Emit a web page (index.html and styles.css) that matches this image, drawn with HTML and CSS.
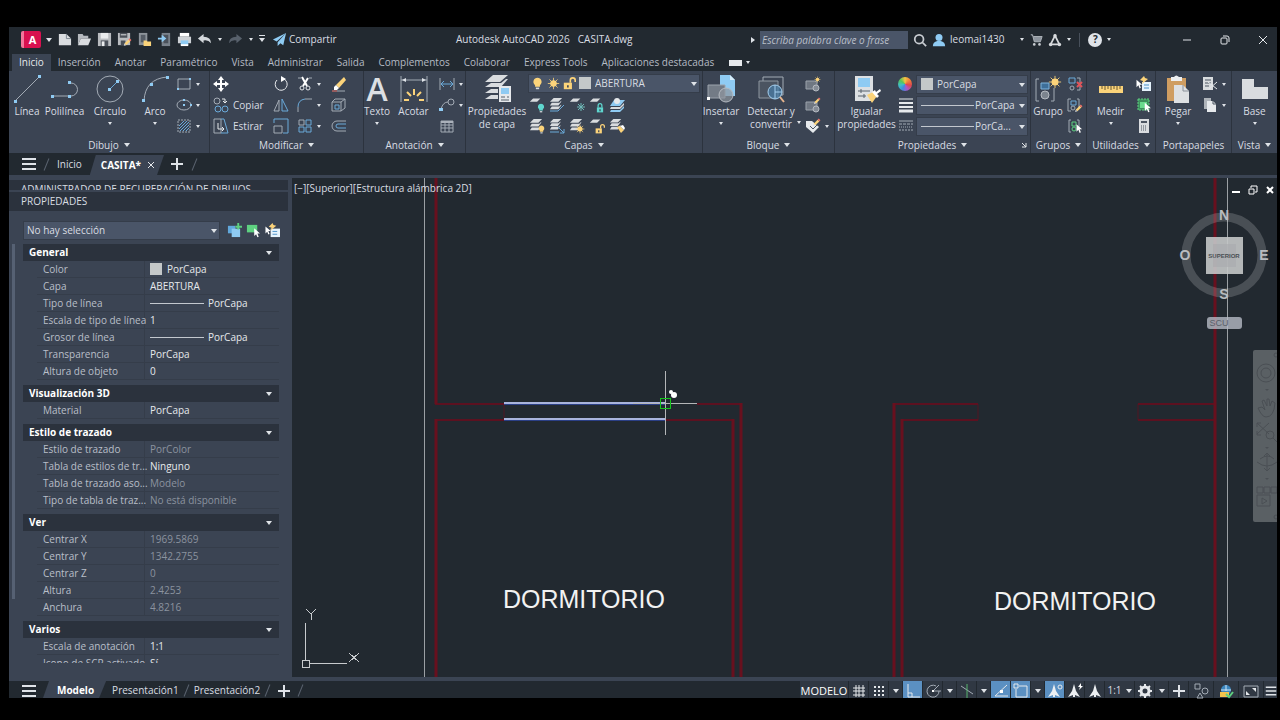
FILE: index.html
```html
<!DOCTYPE html>
<html lang="es">
<head>
  <meta charset="UTF-8">
  <meta name="viewport" content="width=device-width, initial-scale=1.0">
  <title>Autodesk AutoCAD 2026 - CASITA.dwg</title>
  <link rel="stylesheet" href="styles.css">
</head>
<body>
  <!-- shared icon parts -->
  <svg class="defs" aria-hidden="true">
    <symbol id="sheet" viewBox="0 0 16 16"><path class="f-light" d="M5 3h9l-4 4H1z"/></symbol>
    <symbol id="layers" viewBox="0 0 16 16">
      <path class="f-light" d="M5 1h9l-4 4H1z"/>
      <path class="f-light" d="M3 6h8l2-2v1l-3 4H1zM3 10h8l2-2v1l-3 4H1z"/>
    </symbol>
    <symbol id="sun" viewBox="0 0 16 16">
      <circle class="f-yellow" cx="8" cy="8" r="4"/>
      <path class="s-yellow" d="M8 1v14M1 8h14M3 3l10 10M13 3L3 13"/>
    </symbol>
    <symbol id="bulb" viewBox="0 0 16 16">
      <path d="M8 1a5 5 0 0 0-3 9v2h6v-2a5 5 0 0 0-3-9z" fill="currentColor"/>
      <path class="f-light" d="M6 13h4v2H6z"/>
    </symbol>
    <symbol id="lock" viewBox="0 0 16 16">
      <path d="M3 7h10v8H3z" fill="currentColor"/>
      <path d="M5 7V4a3 3 0 0 1 6 0v3" fill="none" stroke="currentColor" stroke-width="2"/>
      <path d="M7 10h2v3H7z" fill="#3b4453"/>
    </symbol>
    <symbol id="unlock" viewBox="0 0 16 16">
      <path d="M1 7h10v8H1z" fill="currentColor"/>
      <path d="M9 7V4a3 3 0 0 1 6 0v2" fill="none" stroke="currentColor" stroke-width="2"/>
      <path d="M5 10h2v3H5z" fill="#3b4453"/>
    </symbol>
    <symbol id="pointer" viewBox="0 0 16 16"><path d="M4 1v12l3-3 2 5 2-1-2-5h4z" fill="#fff"/></symbol>
    <symbol id="pencil" viewBox="0 0 16 16">
      <path class="f-yellow" d="M3 10l7-7 3 3-7 7z"/><path d="M10 3l2-2 3 3-2 2z" fill="#f0746a"/><path class="f-light" d="M3 10l3 3-4 1z"/>
    </symbol>
    <symbol id="burger" viewBox="0 0 16 16"><path d="M1 3h14M1 8h14M1 13h14" stroke="#dfe3e8" stroke-width="2"/></symbol>
    <symbol id="plus" viewBox="0 0 16 16"><path d="M8 2v12M2 8h12" stroke="#dfe3e8" stroke-width="2"/></symbol>
    <symbol id="annot" viewBox="0 0 16 16"><path d="M8 1l2 7 4 6-5-2v2H7v-2l-5 2 4-6z" fill="#eceff2"/></symbol>
  </svg>

  <div class="app">
    <header class="titlebar">
      <div class="quick">
        <button class="logo" aria-label="AutoCAD">A</button>
        <i class="caret"></i>
        <button aria-label="Nuevo"><svg viewBox="0 0 16 16"><path class="f-light" d="M2 2h8l5 5v7H2z"/><path d="M10 2v5h5" fill="none" stroke="#79828d"/></svg></button>
        <button aria-label="Abrir"><svg viewBox="0 0 16 16"><path d="M1 14V2h5l1 2h5v3H4z" fill="#b5b9be"/><path class="f-light" d="M4 7h11l-3 7H1z"/></svg></button>
        <button aria-label="Guardar"><svg viewBox="0 0 16 16"><path d="M1 1h14v14H1z" fill="#b9bcc0"/><path d="M4 1h8v6H4z" fill="#e9ebed"/><path d="M4 9h8v6H4z" fill="#4a5059"/><path d="M5 10h3v5H5z" fill="#e9ebed"/></svg></button>
        <button aria-label="Guardar como"><svg viewBox="0 0 16 16"><path d="M1 1h13v13H1z" fill="#b9bcc0"/><path d="M3 1h8v5H3zM4 9h5v5H4z" fill="#4a5059"/><path d="M4 3h6" stroke="#e9ebed"/><use href="#pencil" x="6" y="6" width="10" height="10"/></svg></button>
        <button aria-label="Abrir de web"><svg viewBox="0 0 16 16"><path d="M2 1h9v13H2z" fill="#8d939a"/><path d="M4 3h5v8H4z" fill="#555c66"/><path class="f-yellow" d="M7 9h3l1 1h4v5H7z"/></svg></button>
        <button aria-label="Guardar en web"><svg viewBox="0 0 16 16"><path d="M5 1h9v14H5z" fill="#79818b"/><path d="M7 3h5v9H7z" fill="#4a515b"/><path class="f-blue" d="M1 6h4V3l5 4-5 4V8H1z"/></svg></button>
        <button aria-label="Trazar"><svg viewBox="0 0 16 16"><path d="M3 1h10v4H3z" fill="#fff"/><path d="M1 5h14v7H1z" fill="#cdd1d5"/><path class="f-blue" d="M4 9h8v5H4z"/><path d="M4 13h8v2H4z" fill="#fff"/></svg></button>
        <button aria-label="Deshacer"><svg viewBox="0 0 16 16"><path d="M1 7l6-5v3q8 0 8 7-3-4-8-3v3z" fill="#d4d8dc"/></svg></button>
        <i class="caret sm"></i>
        <button aria-label="Rehacer"><svg viewBox="0 0 16 16"><path d="M15 7L9 2v3q-8 0-8 7 3-4 8-3v3z" fill="#58616c"/></svg></button>
        <i class="caret sm"></i>
        <i class="caret over"></i>
        <button class="share"><svg viewBox="0 0 16 16"><path class="f-blue" d="M15 1L1 8l4 2zM15 1L6 11v4l3-3 3 2z"/></svg>Compartir</button>
      </div>
      <div class="doc-title"><span>Autodesk AutoCAD 2026</span><span>CASITA.dwg</span></div>
      <div class="account">
        <i class="caret right"></i>
        <input type="text" aria-label="Buscar" placeholder="Escriba palabra clave o frase">
        <button aria-label="Buscar"><svg viewBox="0 0 16 16"><circle cx="7" cy="7" r="5" fill="none" stroke="#c8ccd1" stroke-width="2"/><path d="M10 10l5 5" stroke="#c8ccd1" stroke-width="2"/></svg></button>
        <button class="user"><svg viewBox="0 0 16 16"><circle class="f-blue" cx="8" cy="5" r="4"/><path class="f-blue" d="M1 15q0-5 5-6h4q5 1 5 6z"/></svg>leomai1430</button>
        <i class="caret sm"></i>
        <button aria-label="Tienda"><svg viewBox="0 0 16 16"><path d="M2 2h2l2 8h7l2-6H5" fill="#8d949d" stroke="#b4b9bf"/><circle cx="6" cy="13" r="1.500" fill="#c8ccd1"/><circle cx="12" cy="13" r="1.500" fill="#c8ccd1"/></svg></button>
        <button aria-label="Autodesk App"><svg viewBox="0 0 16 16"><path d="M8 3l5 10H3z" fill="none" stroke="#d7dadd" stroke-width="2"/><g fill="#d7dadd"><circle cx="8" cy="3" r="2"/><circle cx="3" cy="13" r="2"/><circle cx="13" cy="13" r="2"/></g></svg></button>
        <i class="caret sm"></i>
        <span class="vsep"></span>
        <button class="help" aria-label="Ayuda">?</button>
        <i class="caret sm"></i>
        <div class="win">
          <button aria-label="Minimizar"><svg viewBox="0 0 16 16"><path d="M4 8h8" stroke="#dfe3e8"/></svg></button>
          <button aria-label="Restaurar"><svg viewBox="0 0 16 16"><rect class="s-white" x="4" y="6" width="6" height="6" rx="1"/><path class="s-white" d="M6 4h4q2 0 2 2v4"/></svg></button>
          <button aria-label="Cerrar"><svg viewBox="0 0 16 16"><path class="s-white" d="M4 4l8 8M12 4l-8 8"/></svg></button>
        </div>
      </div>
    </header>

    <nav class="menu">
      <a class="on" href="#">Inicio</a>
      <a href="#">Inserción</a>
      <a href="#">Anotar</a>
      <a href="#">Paramétrico</a>
      <a href="#">Vista</a>
      <a href="#">Administrar</a>
      <a href="#">Salida</a>
      <a href="#">Complementos</a>
      <a href="#">Colaborar</a>
      <a href="#">Express Tools</a>
      <a href="#">Aplicaciones destacadas</a>
      <button class="collapse" aria-label="Minimizar cinta"><span></span><i class="caret sm"></i></button>
    </nav>

    <section class="ribbon">
      <div class="panel dibujo">
        <div class="tools">
          <button class="big"><svg viewBox="0 0 28 28"><path class="ln" d="M2 26L26 2"/><path class="dot" d="M1 25h3v3H1zM25 0h3v3h-3z"/></svg>Línea</button>
          <button class="big"><svg viewBox="0 0 28 28"><path class="ln" d="M1 21h19a6 6 0 0 0 0-13h-2"/><path class="dot" d="M0 20h3v3H0zM17 20h3v3h-3zM17 6h3v3h-3z"/></svg>Polilínea</button>
          <button class="big"><svg viewBox="0 0 28 28"><circle class="ln" cx="14" cy="14" r="13"/><path class="ln-b" d="M14 14l7-7"/><path class="dot" d="M12 13h3v3h-3zM20 5h3v3h-3z"/></svg>Círculo<i class="caret sm"></i></button>
          <button class="big"><svg viewBox="0 0 28 28"><path class="ln" d="M3 26Q4 4 26 2"/><path class="dot" d="M1 24h3v3H1zM9 8h3v3H9zM25 1h3v3h-3z"/></svg>Arco<i class="caret sm"></i></button>
          <div class="stack">
            <button aria-label="Rectángulo"><svg viewBox="0 0 16 16"><path class="ln" d="M2 3h12v10H2z"/><path class="dot" d="M1 12h2v2H1zM13 2h2v2h-2z"/></svg><i class="caret sm"></i></button>
            <button aria-label="Elipse"><svg viewBox="0 0 16 16"><ellipse class="ln" cx="8" cy="8" rx="7" ry="5"/><path class="dot" d="M7 7h2v2H7zM7 2h2v2H7zM14 7h2v2h-2z"/></svg><i class="caret sm"></i></button>
            <button aria-label="Sombreado"><svg viewBox="0 0 16 16"><path class="ln" stroke-dasharray="2 1" d="M2 2h12v12H2z"/><path class="ln-b" d="M3 8l5-5M3 11l8-8M4 13l9-9M7 13l6-6M10 13l3-3"/></svg><i class="caret sm"></i></button>
          </div>
        </div>
        <h2>Dibujo<i class="caret"></i></h2>
      </div>

      <div class="panel modificar">
        <div class="tools">
          <div class="stack">
            <button aria-label="Desplazar"><svg viewBox="0 0 16 16"><path d="M8 3v10M3 8h10" stroke="#fff" stroke-width="2"/><path d="M8 0l3 4H5zM8 16l3-4H5zM0 8l4-3v6zM16 8l-4-3v6z" fill="#fff"/></svg></button>
            <button><svg viewBox="0 0 16 16"><circle class="ln" cx="4" cy="4" r="3"/><circle class="ln-b" cx="5" cy="12" r="3"/><circle class="ln-b" cx="12" cy="12" r="3"/><path class="s-white" d="M9 2h3v4M10 4l2 2 2-2"/></svg>Copiar</button>
            <button><svg viewBox="0 0 16 16"><path class="ln" d="M1 1h7v14H1z"/><path class="ln-b" d="M8 1h3l4 14H8"/><path class="s-white" d="M5 5v6h6M9 9l2 2-2 2"/></svg>Estirar</button>
          </div>
          <div class="stack">
            <button aria-label="Girar"><svg viewBox="0 0 16 16"><path class="s-white" d="M11 3a6 6 0 1 1-7 1"/><path d="M8 0l5 3-5 3z" fill="#fff"/></svg></button>
            <button aria-label="Simetría"><svg viewBox="0 0 16 16"><path class="ln" d="M6 3v11H1z"/><path class="ln-b" d="M9 2l6 12H9z"/></svg></button>
            <button aria-label="Escala"><svg viewBox="0 0 16 16"><path class="ln-b" d="M1 5V1h14v14h-5"/><path class="ln" d="M1 8h8v7H1z"/></svg></button>
          </div>
          <div class="stack">
            <button aria-label="Recortar"><svg viewBox="0 0 16 16"><path class="ln" d="M1 2h3M12 2h3"/><path d="M5 1l5 9M11 2l-5 8" stroke="#fff" stroke-width="2"/><circle class="s-white" cx="5" cy="12" r="2"/><circle class="s-white" cx="11" cy="12" r="2"/></svg><i class="caret sm"></i></button>
            <button aria-label="Empalme"><svg viewBox="0 0 16 16"><path class="ln" d="M1 15v-5"/><path class="ln-b" d="M1 10Q1 3 8 2"/><path class="ln" d="M8 2h7"/></svg><i class="caret sm"></i></button>
            <button aria-label="Matriz"><svg viewBox="0 0 16 16"><path class="ln" d="M2 2h5v5H2z"/><path class="ln-b" d="M9 2h5v5H9zM2 9h5v5H2zM9 9h5v5H9z"/></svg><i class="caret sm"></i></button>
          </div>
          <div class="stack">
            <button aria-label="Borrar"><svg viewBox="0 0 16 16"><path class="f-yellow" d="M5 9l8-8 2 3-7 8z"/><path d="M3 11l2-2 3 3-2 2H3z" fill="#fff"/><path d="M1 15h5" stroke="#f0746a"/><path class="ln" d="M6 15h8"/></svg></button>
            <button aria-label="Descomponer"><svg viewBox="0 0 16 16"><path class="ln" d="M1 5h9v9H1zM4 2h10v9M10 5l4-3M1 5l3-3M10 14l4-3"/><path class="ln-b" d="M4 8h4v4H4z"/></svg></button>
            <button aria-label="Desfase"><svg viewBox="0 0 16 16"><path class="ln" d="M15 3H6a5 5 0 0 0 0 10h9"/><path class="ln-b" d="M15 6H7a2 2 0 0 0 0 4h8"/></svg></button>
          </div>
        </div>
        <h2>Modificar<i class="caret"></i></h2>
      </div>

      <div class="panel anotacion">
        <div class="tools">
          <button class="big"><span class="letter">A</span>Texto<i class="caret sm"></i></button>
          <button class="big"><svg viewBox="0 0 28 28"><path class="ln" d="M1 1v26M27 1v26M1 5h26"/><path d="M2 5l4-2v4zM26 5l-4-2v4z" fill="#dfe3e8"/><path d="M14 14v6M7 17l4 4M21 17l-4 4M4 25h5M19 25h5" stroke="#fbd37a" stroke-width="2"/></svg>Acotar</button>
          <div class="stack">
            <button aria-label="Lineal"><svg viewBox="0 0 16 16"><path class="ln" d="M1 2v12M15 2v12"/><path class="ln-b" d="M2 8h12M5 5L2 8l3 3M11 5l3 3-3 3"/></svg><i class="caret sm"></i></button>
            <button aria-label="Directriz"><svg viewBox="0 0 16 16"><circle class="ln" cx="12" cy="5" r="3"/><path class="ln" d="M9 5q-5 0-7 7"/><path class="dot" d="M0 11h4v3H0z"/></svg><i class="caret sm"></i></button>
            <button aria-label="Tabla"><svg viewBox="0 0 16 16"><path class="ln" d="M2 3h12v11H2zM2 7h12M2 10h12M6 5v9M10 5v9"/><path d="M2 3h12v2H2z" fill="#aab1ba"/></svg></button>
          </div>
        </div>
        <h2>Anotación<i class="caret"></i></h2>
      </div>

      <div class="panel capas">
        <div class="tools">
          <button class="big"><svg viewBox="0 0 28 28"><path class="f-light" d="M10 0h15l-8 7H2zM8 8h10l5-4h2l-7 8H2zM8 14h7v4H2zM8 20h7v4H2z"/><path d="M16 11h12v16H16z" fill="#e6e9ec"/><path class="f-blue" d="M18 13h8v6h-8z"/><path d="M18 22h4M18 25h8M24 22h2" stroke="#59626d"/></svg>Propiedades de capa</button>
          <div class="layer-grid">
            <div class="combo layer">
              <select aria-label="Capa actual"><option>ABERTURA</option></select>
              <div class="over-icons">
                <svg class="yellow"><use href="#bulb"/></svg>
                <svg><use href="#sun"/></svg>
                <svg class="yellow"><use href="#unlock"/></svg>
                <span class="swatch"></span>
              </div>
            </div>
            <div class="icons">
              <button aria-label="Desactivar"><svg viewBox="0 0 16 16"><use href="#sheet" y="-1" width="13" height="13"/><use class="teal" href="#bulb" x="7" y="6" width="10" height="10"/></svg></button>
              <button aria-label="Aislar"><svg viewBox="0 0 16 16"><use href="#layers" width="15" height="15"/><path class="ln-b" d="M1 14h8l6-6"/></svg></button>
              <button aria-label="Inutilizar"><svg viewBox="0 0 16 16"><use href="#sheet" y="-1" width="13" height="13"/><path d="M12 6v8M8 10h8M9 7l6 6M15 7l-6 6" stroke="#6fb9b8"/></svg></button>
              <button aria-label="Bloquear"><svg viewBox="0 0 16 16"><use href="#sheet" y="-1" width="13" height="13"/><use class="teal" href="#lock" x="6" y="6" width="10" height="10"/></svg></button>
              <button aria-label="Definir actual"><svg viewBox="0 0 16 16"><path class="f-blue" d="M5 3h11l-5 6H1z"/><path class="f-light" d="M2 10h9l4-4v2l-4 4H1z"/><path class="f-blue" d="M2 13h9l4-4v2l-4 4H1z"/><circle cx="8" cy="4" r="3" fill="#e6e9ec"/></svg></button>
            </div>
            <div class="icons">
              <button aria-label="Activar todas"><svg viewBox="0 0 16 16"><use href="#layers" width="15" height="15"/><use class="yellow" href="#bulb" x="8" y="7" width="9" height="9"/></svg></button>
              <button aria-label="Desaislar"><svg viewBox="0 0 16 16"><use href="#layers" width="14" height="14"/><path class="ln-b" d="M1 14h9M9 9l6 6M15 11v4h-4"/></svg></button>
              <button aria-label="Reutilizar"><svg viewBox="0 0 16 16"><use href="#layers" width="15" height="15"/><use href="#sun" x="6" y="6" width="10" height="10"/></svg></button>
              <button aria-label="Desbloquear"><svg viewBox="0 0 16 16"><use href="#sheet" y="-1" width="13" height="13"/><use class="yellow" href="#unlock" x="6" y="6" width="10" height="10"/></svg></button>
              <button aria-label="Igualar capa"><svg viewBox="0 0 16 16"><use href="#layers" width="14" height="14"/><path class="f-yellow" d="M8 9l3-1 4 4-3 3z"/><path d="M11 8l3-1 2 3-1 2z" fill="#fff"/></svg></button>
            </div>
          </div>
        </div>
        <h2>Capas<i class="caret"></i></h2>
      </div>

      <div class="panel bloque">
        <div class="tools">
          <button class="big"><svg viewBox="0 0 28 28"><path class="f-blue" d="M13 0h10l5 5v16H13z"/><path d="M23 0v5h5" fill="#d6edfb"/><path d="M1 10h17v13H1z" fill="#737b86" stroke="#9ca3ac"/><circle cx="19" cy="20" r="7" fill="#8e959e" fill-opacity=".7" stroke="#b5bac1"/><path d="M0 22h3v3H0z" fill="#fff"/></svg>Insertar<i class="caret sm"></i></button>
          <button class="big side"><svg viewBox="0 0 28 28"><path class="ln" d="M6 6V2h20v18h-3"/><path d="M2 6h19v17H2z" fill="#4b5461" stroke="#8f97a1"/><circle cx="18" cy="17" r="7" fill="#4786b4" fill-opacity=".6" stroke="#a5cfee"/><path d="M18 10v14M18 17h7" stroke="#a5cfee"/><path d="M23 22l4 5" stroke="#e7b58d" stroke-width="2"/></svg>Detectar y convertir<i class="caret sm"></i></button>
          <div class="stack">
            <button aria-label="Crear bloque"><svg viewBox="0 0 16 16"><path d="M1 5h11v8H1z" fill="#6f7782" stroke="#9ca3ac"/><circle cx="11" cy="12" r="3" fill="#858c96" stroke="#b5bac1"/><use href="#sun" x="9" width="7" height="7"/></svg></button>
            <button aria-label="Editar bloque"><svg viewBox="0 0 16 16"><path d="M1 5h11v8H1z" fill="#6f7782" stroke="#9ca3ac"/><circle cx="11" cy="12" r="3" fill="#858c96" stroke="#b5bac1"/><use href="#pencil" x="8" width="8" height="8"/></svg></button>
            <button aria-label="Editar atributos"><svg viewBox="0 0 16 16"><path d="M1 3h6l7 6-6 6-7-6z" fill="#e6e9ec"/><path d="M5 8l3 3 4-4" fill="none" stroke="#4b5461"/><use href="#pencil" x="7" width="9" height="9"/></svg><i class="caret sm"></i></button>
          </div>
        </div>
        <h2>Bloque<i class="caret"></i></h2>
      </div>

      <div class="panel propiedades">
        <div class="tools">
          <button class="big"><svg viewBox="0 0 28 28"><path d="M2 1h18v25H2z" fill="#dde0e3"/><path class="f-blue" d="M5 3h12v9H5z"/><path d="M5 16h12M5 21h8M8 14v4M11 19v4" stroke="#59626d"/><path class="f-yellow" d="M14 20l6-3 4 4-5 7z"/><path d="M19 17l3-2 1 2 4-3 1 2-4 3 2 2-2 2z" fill="#fff"/></svg>Igualar propiedades</button>
          <div class="prop-grid">
            <span class="wheel"></span>
            <div class="combo color"><select aria-label="Color"><option>PorCapa</option></select><span class="swatch"></span></div>
            <svg viewBox="0 0 16 16"><path d="M1 2h14" stroke="#e6e9ec"/><path d="M1 6h14" stroke="#e6e9ec" stroke-width="2"/><path d="M1 10h14" stroke="#e6e9ec" stroke-width="2"/><path d="M1 14h14" stroke="#e6e9ec" stroke-width="3"/></svg>
            <div class="combo line"><select aria-label="Grosor de línea"><option>PorCapa</option></select></div>
            <svg viewBox="0 0 16 16"><path d="M1 3h14" class="ln"/><path d="M1 6h14" class="ln" stroke-dasharray="3 1"/><path d="M1 9h14" class="ln" stroke-dasharray="1 1"/><path d="M1 12h14" class="ln" stroke-dasharray="2 1"/></svg>
            <div class="combo line"><select aria-label="Tipo de línea"><option>PorCa...</option></select></div>
          </div>
        </div>
        <h2>Propiedades<i class="caret"></i></h2>
        <svg class="launcher" viewBox="0 0 8 8"><path class="s-white" d="M2 2l4 4M6 2v4H2"/></svg>
      </div>

      <div class="panel grupos">
        <div class="tools">
          <button class="big"><svg viewBox="0 0 28 28"><path class="ln" d="M5 4H2v22h3M17 26h3V13"/><path d="M7 8h8v6H7z" fill="#3e6f99" stroke="#7fb4dc"/><circle cx="11" cy="20" r="4" fill="#7c848e" stroke="#b5bac1"/><use href="#sun" x="14" width="14" height="14"/></svg>Grupo</button>
          <div class="stack">
            <button aria-label="Desagrupar"><svg viewBox="0 0 16 16"><path class="ln" d="M10 2h3v12h-3"/><path class="ln-b" d="M2 2h6v5H2z"/><circle class="ln" cx="5" cy="12" r="2"/><path d="M10 6l5 5M15 6l-5 5" stroke="#e2545a" stroke-width="2"/></svg></button>
            <button aria-label="Editar grupo"><svg viewBox="0 0 16 16"><path class="ln" d="M4 2H1v12h3M10 2h2v8"/><path class="ln-b" d="M4 4h5v4H4z"/><circle class="ln" cx="6" cy="11" r="2"/><use href="#pencil" x="7" y="7" width="9" height="9"/></svg></button>
            <button aria-label="Selección de grupo"><svg viewBox="0 0 16 16"><path class="ln" d="M4 2H2v12h2M10 2h2v8"/><path d="M5 4h4v4H5z" fill="none" stroke="#5ed181"/><circle cx="7" cy="11" r="2" fill="none" stroke="#5ed181"/><use href="#pointer" x="7" y="5" width="10" height="11"/></svg></button>
          </div>
        </div>
        <h2>Grupos<i class="caret"></i></h2>
      </div>

      <div class="panel utilidades">
        <div class="tools">
          <button class="big"><svg viewBox="0 0 28 28"><path class="f-yellow" d="M2 11h24v7H2z"/><path d="M5 11v3M8 11v4M11 11v3M14 11v4M17 11v3M20 11v4M23 11v3" stroke="#6b5a33"/></svg>Medir<i class="caret sm"></i></button>
          <div class="stack">
            <button aria-label="Selección rápida"><svg viewBox="0 0 16 16"><path d="M6 6h9v9H6z" fill="#e6f3fc"/><path d="M8 9h5M8 12h5" stroke="#4a90c7"/><path class="f-yellow" d="M8 0L4 4l3 1-1 3 6-5-3-1z"/><use href="#pointer" x="-2" y="2" width="10" height="12"/></svg></button>
            <button aria-label="Seleccionar todo"><svg viewBox="0 0 16 16"><path d="M2 2h11v11H2z" fill="#3d8f5c" stroke="#5ed181" stroke-dasharray="2 1"/><path d="M4 5h7v6H4z" fill="#69db8d"/><use href="#pointer" x="6" y="5" width="11" height="11"/></svg></button>
            <button aria-label="Calculadora"><svg viewBox="0 0 16 16"><path d="M3 1h10v14H3z" fill="#d9dcdf"/><path d="M5 3h6v2H5z" fill="#4b5461"/><path d="M5 8h6M5 10h6M5 12h6" stroke="#4b5461" stroke-dasharray="1 1"/></svg></button>
          </div>
        </div>
        <h2>Utilidades<i class="caret"></i></h2>
      </div>

      <div class="panel portapapeles">
        <div class="tools">
          <button class="big"><svg viewBox="0 0 28 28"><path d="M3 3h19v23H3z" fill="#cf9d61"/><path d="M7 2h3q2-3 5 0h3v4H7z" fill="#eceef0"/><path d="M10 10h9l6 6v12H10z" fill="#dde0e3"/><path d="M19 10v6h6" fill="none" stroke="#8b929b"/></svg>Pegar<i class="caret sm"></i></button>
          <div class="stack">
            <button aria-label="Cortar"><svg viewBox="0 0 16 16"><path d="M1 1h10v13H1z" fill="#d9dcdf"/><path d="M3 4h6M3 7h6M3 10h4" stroke="#4b5461"/><path class="s-white" d="M6 6l9 7M15 6l-8 7"/></svg><i class="caret sm"></i></button>
            <button aria-label="Copiar"><svg viewBox="0 0 16 16"><path d="M2 1h7v11H2z" fill="#aeb3b9"/><path d="M5 4h6l3 3v8H5z" fill="#e6e9ec"/><path d="M11 4v3h3" fill="none" stroke="#4b5461"/></svg><i class="caret sm"></i></button>
          </div>
        </div>
        <h2>Portapapeles</h2>
      </div>

      <div class="panel vista">
        <div class="tools">
          <button class="big"><svg viewBox="0 0 28 28"><path class="f-light" d="M1 4h12v8h14v12H1z"/></svg>Base<i class="caret sm"></i></button>
        </div>
        <h2>Vista<i class="caret"></i></h2>
      </div>
    </section>

    <nav class="doc-tabs">
      <button class="ham" aria-label="Menú"><svg><use href="#burger"/></svg></button>
      <i class="slash"></i>
      <a href="#">Inicio</a>
      <a class="on" href="#">CASITA* <svg viewBox="0 0 8 8"><path class="s-white" d="M1 1l6 6M7 1L1 7"/></svg></a>
      <button class="add" aria-label="Nuevo dibujo"><svg><use href="#plus"/></svg></button>
      <i class="slash"></i>
    </nav>

    <main class="workspace">
      <aside class="palette">
        <div class="bar cut">ADMINISTRADOR DE RECUPERACIÓN DE DIBUJOS</div>
        <div class="bar">PROPIEDADES</div>
        <div class="select-row">
          <div class="combo"><select aria-label="Selección"><option>No hay selección</option></select></div>
          <button aria-label="Selección añadida"><svg viewBox="0 0 16 16"><path d="M1 3h8v8H1z" fill="#61a8dc"/><path class="f-blue" d="M5 6h9v9H5z"/><path d="M12 0v7M9 4h7" stroke="#5ed181" stroke-width="2"/></svg></button>
          <button aria-label="Designar objetos"><svg viewBox="0 0 16 16"><path d="M1 2h11v8H1z" fill="#5ed181"/><use href="#pointer" x="6" y="5" width="11" height="11"/></svg></button>
          <button aria-label="Selección rápida"><svg viewBox="0 0 16 16"><path d="M6 6h10v9H6z" fill="#e6f3fc"/><path d="M8 9h5M8 12h5" stroke="#4a90c7"/><path class="f-yellow" d="M8 0L4 4l3 1-1 3 6-5-3-1z"/><use href="#pointer" x="-2" y="2" width="10" height="12"/></svg></button>
        </div>
        <div class="props">
          <h3>General<i class="caret"></i></h3>
          <table>
            <tr><th>Color</th><td><span class="swatch"></span>PorCapa</td></tr>
            <tr><th>Capa</th><td>ABERTURA</td></tr>
            <tr><th>Tipo de línea</th><td><span class="rule"></span>PorCapa</td></tr>
            <tr><th>Escala de tipo de línea</th><td>1</td></tr>
            <tr><th>Grosor de línea</th><td><span class="rule"></span>PorCapa</td></tr>
            <tr><th>Transparencia</th><td>PorCapa</td></tr>
            <tr><th>Altura de objeto</th><td>0</td></tr>
          </table>
          <h3>Visualización 3D<i class="caret"></i></h3>
          <table>
            <tr><th>Material</th><td>PorCapa</td></tr>
          </table>
          <h3>Estilo de trazado<i class="caret"></i></h3>
          <table>
            <tr><th>Estilo de trazado</th><td class="off">PorColor</td></tr>
            <tr><th>Tabla de estilos de tr...</th><td>Ninguno</td></tr>
            <tr><th>Tabla de trazado aso...</th><td class="off">Modelo</td></tr>
            <tr><th>Tipo de tabla de traz...</th><td class="off">No está disponible</td></tr>
          </table>
          <h3>Ver<i class="caret"></i></h3>
          <table>
            <tr><th>Centrar X</th><td class="off">1969.5869</td></tr>
            <tr><th>Centrar Y</th><td class="off">1342.2755</td></tr>
            <tr><th>Centrar Z</th><td class="off">0</td></tr>
            <tr><th>Altura</th><td class="off">2.4253</td></tr>
            <tr><th>Anchura</th><td class="off">4.8216</td></tr>
          </table>
          <h3>Varios<i class="caret"></i></h3>
          <table>
            <tr><th>Escala de anotación</th><td>1:1</td></tr>
            <tr><th>Icono de SCP activado</th><td>Sí</td></tr>
          </table>
        </div>
      </aside>

      <div class="viewport">
        <svg class="drawing" viewBox="0 0 985 499" preserveAspectRatio="xMinYMin slice">
          <g class="axis"><path d="M132 0v499M935 0v499"/></g>
          <g class="wall thin">
            <path d="M143 226h69M143 242h69M405 226h45M373 242h69M601 226h85M609 242h77M846 226h77M846 242h77"/>
            <path d="M212 226v16M686 226v16M846 226v16" opacity=".4"/>
          </g>
          <g class="wall">
            <path d="M144 0v226M144 241v258M923 0v499M441 241v258M449 225v274M602 225v274M610 241v258"/>
          </g>
          <path d="M212 226h162M212 242h162" stroke="#2b3f86" stroke-width="2"/>
          <path d="M212 225h162M212 241h162" stroke="#a9b4dd" stroke-width="2"/>
          <path d="M373 193v64M341 225h64" stroke="#b4b6b8"/>
          <rect x="368" y="220" width="10" height="10" fill="none" stroke="#14c41c" stroke-width="1"/>
          <g class="snap"><circle cx="379" cy="214" r="2"/><circle cx="382" cy="217" r="3"/></g>
          <text x="292" y="430">DORMITORIO</text>
          <text x="783" y="432">DORMITORIO</text>
          <!-- UCS icon -->
          <g class="ucs"><path d="M13 445v37M17 485h38M10 482h7v7h-7zM14 431l5 5 5-5M19 436v6M57 475l10 9M67 475l-10 9"/></g>
        </svg>
        <div class="view-label">[−][Superior][Estructura alámbrica 2D]</div>
        <div class="view-win">
          <button aria-label="Minimizar vista"><svg viewBox="0 0 10 10"><path d="M1 7h8" stroke="#fff" stroke-width="2"/></svg></button>
          <button aria-label="Restaurar vista"><svg viewBox="0 0 10 10"><path d="M1 4h5v5H1zM3 3V1h6v6H7" fill="none" stroke="#fff" stroke-width="1"/></svg></button>
          <button aria-label="Cerrar vista"><svg viewBox="0 0 10 10"><path d="M2 2l6 6M8 2L2 8" stroke="#fff" stroke-width="2"/></svg></button>
        </div>
        <svg class="cube" viewBox="0 0 92 122">
          <circle cx="46" cy="49" r="38" fill="none" stroke="#fff" stroke-opacity=".18" stroke-width="9"/>
          <rect x="28" y="31" width="37" height="37" fill="#c4c6c8" fill-opacity=".9"/>
          <rect x="35" y="38" width="23" height="23" fill="#a8aaad" fill-opacity=".6"/>
          <text class="face" x="46" y="52">SUPERIOR</text>
          <text x="46" y="14">N</text><text x="46" y="93">S</text><text x="7" y="54">O</text><text x="86" y="54">E</text>
          <rect x="29" y="111" width="35" height="12" rx="3" fill="#b6bac6" fill-opacity=".8"/>
          <text class="scu" x="41" y="120">SCU</text>
        </svg>
        <svg class="navbar" viewBox="0 0 24 172">
          <rect x="0" y="0" width="28" height="172" rx="2" fill="#7a7e81" fill-opacity=".65"/>
          <g fill="none" stroke="#4a4f54">
            <circle cx="13" cy="23" r="9"/><circle cx="13" cy="23" r="5"/><circle cx="23" cy="5" r="2"/>
            <path d="M5 58q4 9 8 9 8 0 9-14l-3-2-2 5-1-7h-2v7l-3-6-2 1 3 9-3-3z"/>
            <path d="M4 73l12 11M16 73L4 84M4 77v-4h4M4 81v4h4"/><circle cx="17" cy="85" r="4"/><path d="M20 88l4 4"/>
            <path d="M14 103v18M11 106l3-3 3 3M11 118l3 3 3-3M4 112q10 8 20 0M7 109q8-6 14 0"/>
            <path d="M4 137h6v6H4zM11 137h6v6h-6zM18 137h6v6h-6zM4 145h13v11H4zM9 148v6l5-3z"/><circle cx="23" cy="167" r="2"/>
          </g>
          <g fill="#4a4f54"><path d="M12 39h4l-2 2zM12 97h4l-2 2zM12 128h4l-2 2z"/></g>
        </svg>
      </div>
    </main>

    <footer class="status">
      <nav class="layouts">
        <button class="ham" aria-label="Menú"><svg><use href="#burger"/></svg></button>
        <a class="on" href="#">Modelo</a>
        <a href="#">Presentación1</a>
        <i class="slash"></i>
        <a href="#">Presentación2</a>
        <i class="slash"></i>
        <button class="add" aria-label="Nueva presentación"><svg><use href="#plus"/></svg></button>
        <i class="slash"></i>
      </nav>
      <div class="toggles">
        <button class="model">MODELO</button>
        <button aria-label="Rejilla"><svg viewBox="0 0 16 16"><path class="s-white" d="M5 2v12M8 2v12M12 2v12M2 5h12M2 8h12M2 12h12"/></svg></button>
        <button aria-label="Forzcursor"><svg viewBox="0 0 16 16"><path d="M3 4h11M3 8h11M3 12h11" stroke="#e6e9ec" stroke-width="2" stroke-dasharray="2 2"/></svg></button>
        <button class="drop" aria-label="Opciones de forzcursor"><i class="caret"></i></button>
        <button class="active" aria-label="Orto"><svg viewBox="0 0 16 16"><path class="s-white" d="M3 1v13h12M3 10h4v4"/></svg></button>
        <button aria-label="Polar"><svg viewBox="0 0 16 16"><path class="ln" d="M14 8a6 6 0 1 1-3-5M8 8h8M8 8l6-6"/><path d="M7 7h2v2H7z" fill="#fff"/></svg></button>
        <button class="drop" aria-label="Opciones de polar"><i class="caret"></i></button>
        <button aria-label="Isométrico"><svg viewBox="0 0 16 16"><path class="ln" d="M2 3l12 8"/><path d="M8 1v14" stroke="#57b36e"/></svg></button>
        <button class="drop" aria-label="Opciones de isométrico"><i class="caret"></i></button>
        <button class="active" aria-label="Rastreo"><svg viewBox="0 0 16 16"><path class="s-white" d="M14 2L2 13h13"/><path d="M7 7h3v3H7z" fill="#fff"/></svg></button>
        <button class="active" aria-label="Refent"><svg viewBox="0 0 16 16"><path class="s-white" d="M6 3h8v11H3V6M1 1h4v4H1z"/></svg></button>
        <button class="drop" aria-label="Opciones de refent"><i class="caret"></i></button>
        <button class="active" aria-label="Objetos anotativos"><svg viewBox="0 0 16 16"><use href="#annot" x="-1"/><circle class="s-white" cx="13" cy="4" r="2"/></svg></button>
        <button aria-label="Escalas automáticas"><svg viewBox="0 0 16 16"><use href="#annot" x="-1"/><path d="M14 0l-3 4h2l-1 3 4-4h-2z" fill="#fff"/></svg></button>
        <button aria-label="Escala"><svg><use href="#annot"/></svg></button>
        <button class="scale">1:1<i class="caret"></i></button>
        <button aria-label="Espacio de trabajo"><svg viewBox="0 0 16 16"><circle cx="8" cy="8" r="4" fill="none" stroke="#e6e9ec" stroke-width="3"/><path d="M8 1v3M8 12v3M1 8h3M12 8h3M3 3l2 2M11 11l2 2M13 3l-2 2M5 11l-2 2" stroke="#e6e9ec" stroke-width="2"/></svg></button>
        <button class="drop" aria-label="Opciones de espacio"><i class="caret"></i></button>
        <button aria-label="Control de anotaciones"><svg><use href="#plus"/></svg></button>
        <button class="wide" aria-label="Aislar objetos"><svg viewBox="0 0 16 16"><path class="ln" d="M2 1h5v5H2zM7 10l3 5H4z"/><circle class="ln" cx="12" cy="8" r="3"/></svg></button>
        <button class="wide" aria-label="Rendimiento"><svg viewBox="0 0 16 16"><circle cx="8" cy="7" r="5" fill="#3c86be"/><path d="M3 7h10M8 2v6" stroke="#cfe6f7"/><path d="M2 9h9v5H2z" fill="#f3c34d"/><path d="M8 11l3 3 4-5" fill="none" stroke="#5ed181" stroke-width="2"/></svg></button>
        <button class="wide" aria-label="Pantalla limpia"><svg viewBox="0 0 16 16"><path class="ln" d="M1 3h14v11H1z"/><path d="M9 5h4v4zM3 12h4l-4-4z" fill="#e6e9ec"/></svg></button>
        <button class="drop" aria-label="Personalización"><svg><use href="#burger"/></svg></button>
      </div>
    </footer>
  </div>
</body>
</html>
```

FILE: styles.css
```css
:root {
  --dark: #222930;
  --panel: #3b4453;
  --bar: #2b323d;
  --field: #4a5568;
  --line: #2c333e;
  --text: #d9dde3;
  --muted: #8b939f;
  --blue: #8fcbf3;
  --yellow: #fbd37a;
}

* {
  box-sizing: border-box;
}

body {
  margin: 0;
  height: 100vh;
  padding: 27px 3px 22px 9px;
  background: #000;
  color: var(--text);
  font-family: "Open Sans", "Noto Sans", sans-serif;
  font-size: 10px;
  line-height: 13px;
  overflow: hidden;
}

button, input, select {
  font: inherit;
  color: inherit;
}

button {
  padding: 0;
  border: none;
  background: none;
  display: flex;
  align-items: center;
  justify-content: center;
}

a {
  color: inherit;
  text-decoration: none;
}

h2, h3 {
  margin: 0;
  font-size: inherit;
}

svg {
  width: 16px;
  height: 16px;
  flex: none;
}

.defs {
  position: absolute;
  width: 0;
  height: 0;
}

/* icon paint */
.f-light { fill: #d9dcdf; }
.f-blue { fill: var(--blue); }
.f-yellow { fill: var(--yellow); }
.s-yellow { stroke: var(--yellow); fill: none; }
.s-white { stroke: #e6e9ec; fill: none; }
.ln { stroke: #a3abb5; fill: none; }
.ln-b { stroke: #6aaada; fill: none; }
.dot { fill: var(--blue); }
.teal { color: #5fd6cf; }
.yellow { color: var(--yellow); }

.caret {
  flex: none;
  width: 0;
  border: 3px solid transparent;
  border-top: 4px solid #dfe3e8;
  border-bottom: 0;
}

.caret.sm {
  border-width: 2px;
  border-top-width: 3px;
  border-bottom: 0;
}

.caret.right {
  border: 3px solid transparent;
  border-left: 4px solid #dfe3e8;
  border-right: 0;
}

.app {
  height: 100%;
  display: flex;
  flex-direction: column;
  background: var(--dark);
}

/* title bar */
.titlebar {
  display: grid;
  grid-template-columns: 447fr 293fr 528fr;
  height: 25px;
  align-items: center;
  flex: none;
}

.quick, .account, .doc-title {
  display: flex;
  align-items: center;
}

.quick {
  padding-left: 12px;
  gap: 5px;
}

.quick svg {
  width: 15px;
  height: 15px;
}

.quick > .caret.sm {
  margin: 0 1px;
}

.quick .caret.over {
  position: relative;
}

.caret.over::before {
  content: "";
  position: absolute;
  left: -3px;
  top: -7px;
  width: 6px;
  height: 1px;
  background: #dfe3e8;
}

.logo {
  width: 20px;
  height: 17px;
  background: #d8114f;
  border-left: 3px solid #f2779c;
  border-radius: 2px;
  color: #fff;
  font-size: 11px;
  font-weight: bold;
}

.share {
  gap: 2px;
  margin-left: 2px;
}

.doc-title {
  gap: 8px;
}

.account {
  gap: 5px;
  padding-left: 2px;
}

.account input {
  width: 148px;
  height: 18px;
  padding: 0 2px;
  border: none;
  background: var(--field);
  font-style: italic;
}

.account input::placeholder {
  color: #b9bfc8;
}

.account svg {
  width: 14px;
  height: 14px;
}

.user {
  gap: 4px;
  margin-right: 11px;
}

.vsep {
  width: 1px;
  height: 14px;
  margin: 0 3px;
  background: #48505b;
}

.help {
  width: 14px;
  height: 14px;
  border-radius: 50%;
  background: #dfe3e8;
  color: var(--dark);
  font-weight: bold;
}

.win {
  margin-left: auto;
  padding-right: 6px;
  display: flex;
  gap: 22px;
}

.account .win svg {
  width: 16px;
  height: 16px;
}

/* ribbon tabs */
.menu {
  display: flex;
  flex: none;
  height: 17px;
  margin-top: 2px;
  padding-left: 3px;
  color: #b5bbc4;
}

.menu a {
  padding: 2px 7px 0;
}

.menu .on {
  background: var(--panel);
  color: #e6e9ec;
}

.collapse {
  margin-left: 8px;
  gap: 4px;
}

.collapse span {
  width: 13px;
  height: 6px;
  background: #e6e9ec;
}

/* ribbon */
.ribbon {
  display: grid;
  grid-template-columns: 201fr 154fr 102fr 237fr 132fr 196fr 56fr 69fr 76fr 45fr;
  height: 82px;
  flex: none;
  background: var(--panel);
}

.panel {
  min-width: 0;
  position: relative;
  display: flex;
  flex-direction: column;
  justify-content: space-between;
  border-right: 1px solid var(--line);
}

.panel:last-child {
  border-right: none;
}

.panel h2 {
  height: 16px;
  display: flex;
  align-items: center;
  justify-content: center;
  gap: 5px;
  font-weight: normal;
}

.tools {
  display: grid;
  padding-top: 3px;
}

.dibujo .tools { grid-template-columns: 36px 39px 52px 38px 1fr; }
.modificar .tools { grid-template-columns: 60px 24px 34px 1fr; padding-left: 1px; }
.anotacion .tools { grid-template-columns: 26px 38px 28px; justify-content: space-between; }
.capas .tools { grid-template-columns: 62px 1fr; }
.bloque .tools { grid-template-columns: 36px 64px 1fr; }
.propiedades .tools { grid-template-columns: 63px 1fr; }
.grupos .tools { grid-template-columns: 34px 1fr; }
.utilidades .tools { grid-template-columns: 47px 1fr; }
.portapapeles .tools { grid-template-columns: 44px 1fr; }

.big {
  flex-direction: column;
  justify-content: flex-start;
  text-align: center;
  position: relative;
}

.big svg, .letter {
  width: 28px;
  height: 28px;
  margin: 1px 0 2px;
}

.big .caret {
  margin-top: 4px;
}

.side .caret {
  position: absolute;
  right: 2px;
  bottom: 12px;
}

.letter {
  color: #dde0e4;
  font-size: 32px;
  font-weight: 600;
  line-height: 28px;
}

.stack {
  display: grid;
  grid-auto-rows: 20px;
  align-content: start;
  row-gap: 1px;
}

.stack button {
  justify-content: flex-start;
  gap: 4px;
  padding-left: 2px;
}

.combo {
  position: relative;
  display: flex;
  background: var(--field);
  border: 1px solid #353d4a;
  height: 19px;
  min-width: 0;
}

.combo select {
  appearance: none;
  width: 100%;
  padding: 0 3px;
  border: none;
  background: none;
}

.combo::after {
  content: "";
  position: absolute;
  right: 2px;
  top: 7px;
  border: 3px solid transparent;
  border-top: 4px solid #dfe3e8;
  border-bottom: 0;
  pointer-events: none;
}

.swatch {
  display: inline-block;
  width: 12px;
  height: 12px;
  background: #c4c8c9;
}

.layer-grid {
  display: grid;
  grid-template-rows: 20px 20px 20px;
  row-gap: 1px;
}

.layer {
  margin-right: 2px;
}

.layer select {
  padding-left: 66px;
}

.over-icons {
  position: absolute;
  left: 2px;
  top: 2px;
  display: flex;
  gap: 3px;
  pointer-events: none;
}

.over-icons svg {
  width: 13px;
  height: 13px;
}

.icons {
  display: flex;
  gap: 4px;
  padding-left: 1px;
}

.prop-grid {
  display: grid;
  grid-template-columns: 18px 1fr;
  grid-auto-rows: 20px;
  row-gap: 1px;
  align-items: center;
  padding-right: 2px;
}

.wheel {
  width: 14px;
  height: 14px;
  border-radius: 50%;
  background: conic-gradient(#f6c343, #f0803c, #e0474c, #b054c8, #3f8be0, #3fbfc4, #57c457, #f6c343);
}

.color select {
  padding-left: 20px;
}

.color .swatch {
  position: absolute;
  left: 4px;
  top: 2px;
}

.line select {
  padding-left: 58px;
}

.line::before {
  content: "";
  position: absolute;
  left: 4px;
  top: 8px;
  width: 53px;
  height: 1px;
  background: #c3c8cf;
}

.launcher {
  position: absolute;
  right: 2px;
  bottom: 4px;
  width: 8px;
  height: 8px;
}

/* drawing tabs */
.doc-tabs, .layouts {
  display: flex;
  align-items: center;
  flex: none;
}

.doc-tabs {
  height: 25px;
  border-bottom: 3px solid var(--panel);
  padding-left: 12px;
}

.ham, .add {
  width: 16px;
}

.doc-tabs > a {
  padding: 0 8px 0 1px;
}

.doc-tabs > .on, .layouts > .on {
  background: var(--panel);
  color: #fff;
  font-weight: bold;
  clip-path: polygon(6px 0, 100% 0, calc(100% - 7px) 100%, 0 100%);
}

.doc-tabs > .on {
  align-self: stretch;
  display: flex;
  align-items: center;
  gap: 6px;
  margin-top: 2px;
  padding: 0 9px 0 11px;
}

.doc-tabs > .on svg {
  width: 8px;
  height: 8px;
}

.slash {
  width: 1px;
  height: 13px;
  margin: 0 9px;
  background: #59626e;
  transform: rotate(22deg);
}

.doc-tabs .add {
  margin-left: 5px;
}

/* workspace */
.workspace {
  flex: 1;
  min-height: 0;
  display: flex;
  background: var(--panel);
}

.palette {
  width: 283px;
  flex: none;
  display: flex;
  flex-direction: column;
  padding: 2px 4px 14px 0;
}

.bar {
  flex: none;
  height: 19px;
  padding: 3px 12px;
  background: var(--bar);
  margin-bottom: 10px;
}

.bar.cut {
  height: 10px;
  margin-bottom: 2px;
  overflow: hidden;
}

.select-row {
  display: flex;
  gap: 4px;
  padding: 0 8px 0 14px;
}

.select-row .combo {
  flex: 1;
  margin-right: 3px;
}

.select-row svg {
  width: 15px;
  height: 15px;
}

.props {
  flex: 1;
  min-height: 0;
  overflow: hidden;
  margin-top: 4px;
  margin-left: 3px;
  padding: 0 9px 0 11px;
  background: linear-gradient(#566173, #566173) 0 0 / 3px 355px no-repeat;
}

.props h3 {
  display: flex;
  align-items: center;
  justify-content: space-between;
  height: 17px;
  padding: 0 7px 0 6px;
  background: var(--bar);
  color: #fff;
}

.props table {
  width: 100%;
  margin-bottom: 5px;
  padding-left: 14px;
  table-layout: fixed;
  border-spacing: 0;
}

.props th, .props td {
  height: 17px;
  padding: 0 6px;
  border-bottom: 1px solid #353d4a;
  font-weight: normal;
  text-align: left;
  white-space: nowrap;
}

.props th {
  width: 107px;
  padding-right: 0;
  color: #b9bfc8;
}

.props td {
  border-left: 1px solid #353d4a;
  padding-left: 5px;
  color: #e6e9ec;
}

.props td.off {
  color: var(--muted);
}

.props .swatch {
  margin-right: 5px;
  vertical-align: -2px;
}

.rule {
  display: inline-block;
  width: 54px;
  height: 1px;
  margin-right: 4px;
  vertical-align: 3px;
  background: #c3c8cf;
}

.viewport {
  flex: 1;
  position: relative;
  overflow: hidden;
  background: var(--dark);
}

.drawing {
  display: block;
  width: 100%;
  height: 100%;
  shape-rendering: crispEdges;
}

.drawing text {
  font-family: "Liberation Sans", sans-serif;
  font-size: 25px;
  fill: #f2f2f2;
  text-anchor: middle;
}

.axis { stroke: #9ba0a4; }
.wall { stroke: #68101e; stroke-width: 3; shape-rendering: auto; }
.wall.thin { stroke: #5c1120; stroke-width: 2; }
.ucs { stroke: #c8cbce; fill: none; }
.snap { fill: #fff; shape-rendering: auto; }

.view-label {
  position: absolute;
  left: 2px;
  top: 4px;
}

.view-win {
  position: absolute;
  right: 2px;
  top: 7px;
  display: flex;
  gap: 7px;
}

.view-win svg {
  width: 10px;
  height: 10px;
}

.cube {
  position: absolute;
  right: 7px;
  top: 28px;
  width: 92px;
  height: 122px;
  overflow: visible;
}

.cube text {
  font: bold 14px "Liberation Sans", sans-serif;
  fill: #b9bcbf;
  text-anchor: middle;
}

.cube .face {
  font-size: 6px;
  fill: #4b4f54;
}

.cube .scu {
  font-size: 9px;
  font-weight: normal;
  fill: #5b6069;
}

.navbar {
  position: absolute;
  right: 0;
  top: 172px;
  width: 24px;
  height: 172px;
}

/* bottom bar */
.status {
  flex: none;
  display: flex;
  justify-content: space-between;
  height: 21px;
  border-top: 4px solid var(--panel);
}

.layouts {
  padding: 2px 0 0 12px;
}

.layouts > .on {
  align-self: stretch;
  margin: -2px 6px 0;
  padding: 3px 12px 0 14px;
}

.layouts .slash {
  margin: 0 7px;
}

.layouts .add {
  margin: 0 1px;
}

.toggles {
  display: flex;
  gap: 1px;
}

.toggles button {
  width: 19px;
  padding-top: 2px;
  background: #303843;
}

.toggles .model { width: 48px; font-size: 11px; color: #fff; }
.toggles .drop { width: 13px; }
.toggles .scale { width: 29px; gap: 4px; }
.toggles .wide { width: 24px; }
.toggles .active { background: #5b90c2; }

.toggles .drop svg {
  width: 12px;
}
```
